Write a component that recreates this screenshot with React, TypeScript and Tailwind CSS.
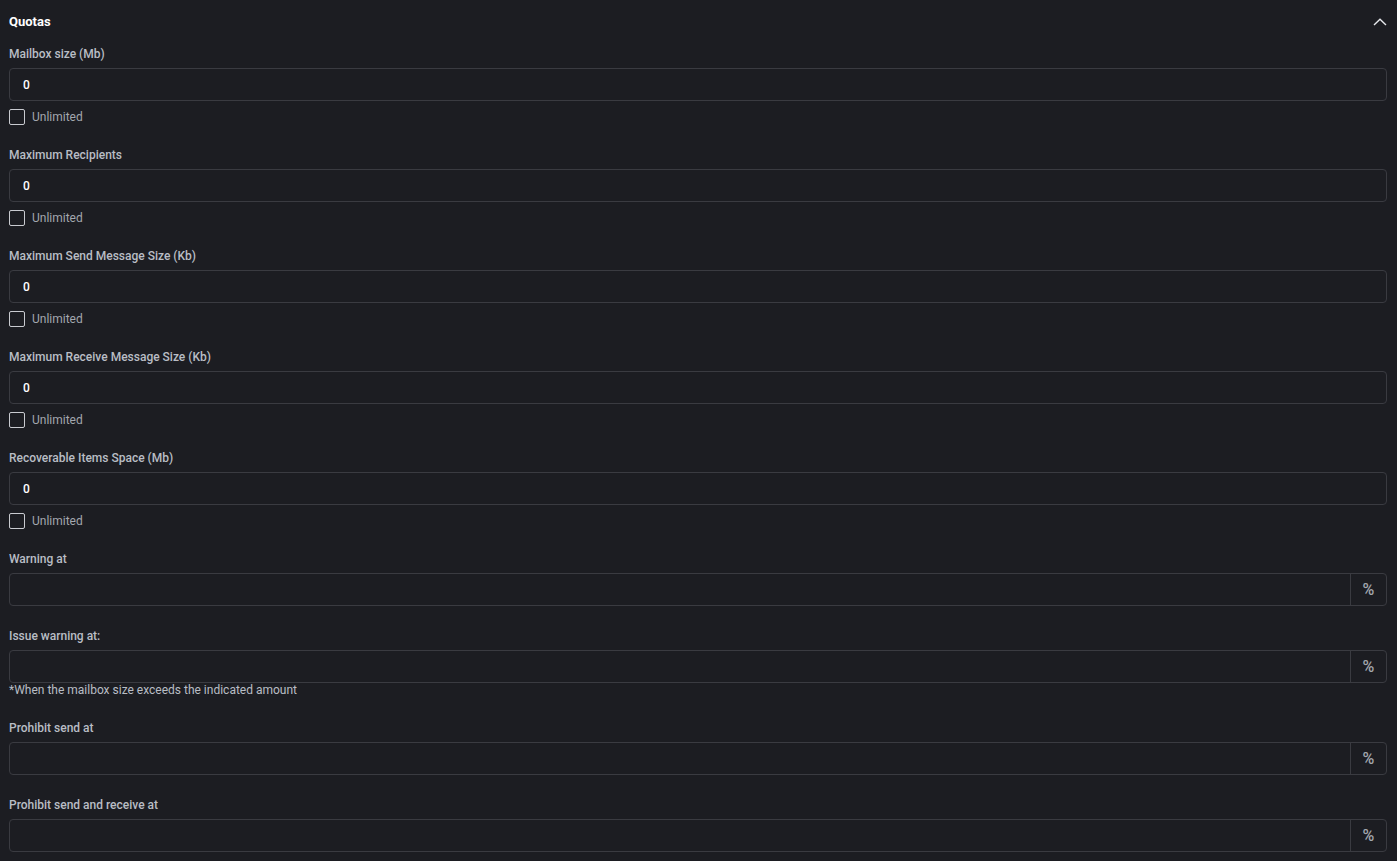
import React from "react";

const font = { fontFamily: "Roboto, 'Liberation Sans', sans-serif" };

function NumberField({ label }: { label: string }) {
  return (
    <div className="flex flex-col">
      <label className="text-[12px] leading-[16px] font-medium text-[#b9bdc5] mb-[6px]">
        {label}
      </label>
      <input
        defaultValue="0"
        className="h-[33px] w-full rounded-[4px] border border-[#3a3b41] bg-[#1c1d22] px-[13px] text-[12px] font-medium text-white outline-none"
      />
      <label className="mt-[8px] flex h-[16px] items-center gap-[7px]">
        <span className="h-[16px] w-[16px] rounded-[2px] border border-[#c9cbd0]" />
        <span className="text-[12px] text-[#a3a7ae]">Unlimited</span>
      </label>
    </div>
  );
}

function PercentField({ label, hint }: { label: string; hint?: string }) {
  return (
    <div className="flex flex-col">
      <label className="text-[12px] leading-[16px] font-medium text-[#b9bdc5] mb-[6px]">
        {label}
      </label>
      <div className="flex h-[33px] w-full rounded-[4px] border border-[#3a3b41]">
        <input className="min-w-0 flex-1 bg-transparent px-[13px] text-[12px] text-white outline-none" />
        <span className="flex w-[36px] items-center justify-center border-l border-[#3a3b41] text-[16px] font-medium text-[#a3a7ae]">
          %
        </span>
      </div>
      {hint && (
        <p className="-mt-px text-[12px] leading-[16px] text-[#b9bdc5]">{hint}</p>
      )}
    </div>
  );
}

export default function App() {
  return (
    <div className="min-h-[861px] bg-[#1c1d22] pl-[9px] pr-[10px] pt-[14px]" style={font}>
      {/* Header */}
      <div className="flex h-[16px] items-center justify-between">
        <h2 className="text-[13px] font-bold text-white">Quotas</h2>
        <svg width="14" height="8" viewBox="0 0 14 8" fill="none">
          <path d="M1 7L7 1.2L13 7" stroke="#e6e8ec" strokeWidth="1.4" />
        </svg>
      </div>

      <div className="mt-[16px] flex flex-col gap-[22px]">
        <NumberField label="Mailbox size (Mb)" />
        <NumberField label="Maximum Recipients" />
        <NumberField label="Maximum Send Message Size (Kb)" />
        <NumberField label="Maximum Receive Message Size (Kb)" />
        <NumberField label="Recoverable Items Space (Mb)" />
        <PercentField label="Warning at" />
        <PercentField
          label="Issue warning at:"
          hint="*When the mailbox size exceeds the indicated amount"
        />
        <PercentField label="Prohibit send at" />
        <PercentField label="Prohibit send and receive at" />
      </div>
    </div>
  );
}
